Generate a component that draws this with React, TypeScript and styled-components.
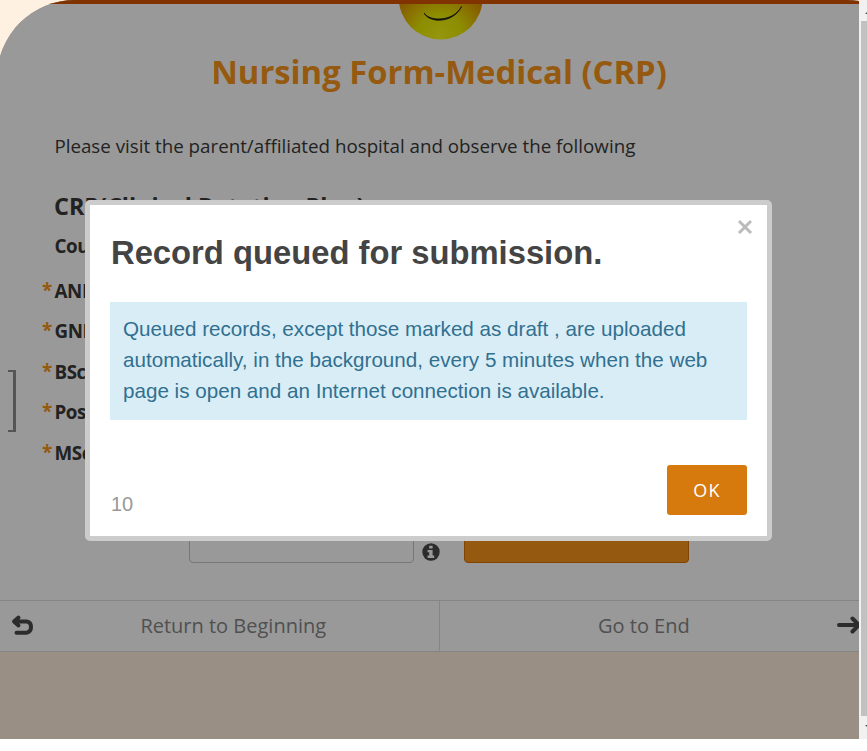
import React from 'react';
import styled, { createGlobalStyle } from 'styled-components';

const GlobalStyle = createGlobalStyle`
  * { box-sizing: border-box; }
  body { margin: 0; background: #fff; font-family: "Open Sans", sans-serif; overflow: hidden; }
  h1, h2, h3, p { margin: 0; }
`;

const Frame = styled.div`
  position: relative;
  display: flex;
  width: 867px;
  height: 739px;
  overflow: hidden;
  background: #fff1e2;
`;

const Viewport = styled.div`
  width: 859px;
  height: 739px;
  flex: none;
  overflow: hidden;
`;

const Shade = styled.div`
  width: 928px;
  height: 739px;
  margin-left: -3px;
  padding-left: 3px;
  border-radius: 78px 78px 0 0;
  overflow: hidden;
  background: #998f85;
`;

const Strip = styled.div`
  height: 4px;
  margin-left: -3px;
  background: #803300;
`;

const Paper = styled.main`
  display: flex;
  flex-direction: column;
  height: 648px;
  margin-left: -3px;
  padding-left: 3px;
  background: #999;
  color: #222;
`;

const Face = styled.svg`
  display: block;
  width: 86px;
  height: 36px;
  margin-left: 398px;
`;

const Title = styled.h1`
  width: 878px;
  height: 64px;
  text-align: center;
  font-size: 32.8px;
  line-height: 64px;
  font-weight: 700;
  color: #955910;
`;

const Intro = styled.p`
  margin: 26px 0 0 54.4px;
  height: 32px;
  font-size: 18.75px;
  line-height: 32px;
`;

const GroupTitle = styled.h3`
  margin: 27px 0 0 54px;
  height: 35px;
  font-size: 23.4px;
  line-height: 34px;
  font-weight: 700;
`;

const GridLabel = styled.div`
  margin: 8px 0 0 54.4px;
  height: 28px;
  font-size: 18.75px;
  line-height: 27px;
  font-weight: 700;
  letter-spacing: -0.4px;
`;

const Questions = styled.div`
  display: flex;
  height: 213px;
  margin-top: 10px;
`;

const Bracket = styled.div`
  width: 8px;
  height: 62px;
  margin: 100px 26px 0 8px;
  border: solid #555;
  border-width: 2px 3px 2px 0;
`;

const Labels = styled.div`
  display: flex;
  flex-direction: column;
`;

const Question = styled.div`
  display: flex;
  height: 40.4px;
  font-size: 18.75px;
  line-height: 41px;
  font-weight: 700;
  letter-spacing: -0.4px;
`;

const Star = styled.span`
  width: 12.5px;
  font-size: 19px;
  font-weight: 700;
  color: #955910;
`;

const Actions = styled.div`
  display: flex;
  height: 60px;
  margin: 30px 0 0 189px;
`;

const TextInput = styled.div`
  width: 225px;
  height: 50px;
  border: 1px solid #777;
  border-radius: 4px;
`;

const InfoIcon = styled.svg`
  width: 18px;
  height: 18px;
  margin: 29.5px 24.5px 0 7.5px;
`;

const Submit = styled.div`
  width: 225px;
  height: 50px;
  border: 1px solid #804400;
  border-radius: 4px;
  background: #955910;
`;

const PageNav = styled.nav`
  display: flex;
  height: 52px;
  flex: none;
  margin-top: auto;
  border: solid #858585;
  border-width: 1px 0;
  font-size: 20px;
  line-height: 50px;
  color: #505050;
`;

const NavItem = styled.div<{ $start?: boolean }>`
  display: flex;
  align-items: flex-start;
  width: ${p => (p.$start ? 440 : 428)}px;
  flex: none;
  border-right: ${p => (p.$start ? '1px solid #858585' : '0')};
`;

const NavText = styled.span<{ $left: number; $width: number }>`
  width: ${p => p.$width}px;
  flex: none;
  margin-left: ${p => p.$left}px;
  white-space: nowrap;
`;

const NavIcon = styled.svg<{ $left: number }>`
  width: 26px;
  height: 26px;
  flex: none;
  margin: 11px 0 0 ${p => p.$left}px;
  fill: none;
  stroke: #2c2c2c;
  stroke-width: 4;
  stroke-linecap: round;
  stroke-linejoin: round;
`;

const Scrollbar = styled.div`
  display: flex;
  flex-direction: column;
  width: 8px;
  flex: none;
  padding-left: 2px;
  background: #f1f1f1;
`;

const Thumb = styled.div`
  height: 695px;
  background: #c1c1c1;
`;

const ScrollArrow = styled.svg<{ $h: number }>`
  display: block;
  width: 6px;
  height: ${p => p.$h}px;
  fill: #505050;
`;

const Dialog = styled.section`
  position: absolute;
  left: 85px;
  top: 200px;
  width: 687px;
  height: 341px;
  display: flex;
  flex-direction: column;
  padding: 10px 20px 21px;
  border: 5px solid #ccc;
  border-radius: 5px;
  background: #fff;
  font-family: "Liberation Sans", Arial, sans-serif;
`;

const DialogHead = styled.header`
  display: flex;
  justify-content: space-between;
  height: 87px;
`;

const DialogTitle = styled.h2`
  margin-left: 1px;
  font-size: 32.75px;
  line-height: 76px;
  font-weight: 700;
  color: #444;
  white-space: nowrap;
`;

const CloseIcon = styled.svg`
  width: 16px;
  height: 16px;
  margin: 4px -6px 0 0;
  stroke: #bbb;
  stroke-width: 3;
`;

const Notice = styled.p`
  height: 118px;
  padding: 11px 13px;
  background: #d9edf7;
  color: #31708f;
  font-size: 20.63px;
  line-height: 31px;
  white-space: nowrap;
`;

const DialogFoot = styled.footer`
  display: flex;
  justify-content: space-between;
  align-items: flex-end;
  margin-top: auto;
`;

const Counter = styled.span`
  margin-left: 1px;
  font-size: 20px;
  line-height: 21px;
  color: #999;
`;

const OkButton = styled.button`
  width: 80px;
  height: 50px;
  padding: 0 0 1px 0;
  border: 0;
  border-radius: 3px;
  background: #d67a0e;
  color: #fff;
  font: 400 18px "Open Sans", sans-serif;
  letter-spacing: 1.2px;
`;

const questions = ['ANM', 'GNM', 'BSc', 'Post', 'MSc'];

export default function App() {
  return (
    <>
      <GlobalStyle />
      <Frame>
        <Viewport>
          <Shade>
            <Strip />
            <Paper>
              <Face viewBox="0 0 86 36">
                <defs>
                  <radialGradient id="skin" gradientUnits="userSpaceOnUse" cx="42" cy="33" r="52">
                    <stop offset="0" stopColor="#96960f" />
                    <stop offset=".45" stopColor="#8d8d00" />
                    <stop offset="1" stopColor="#855600" />
                  </radialGradient>
                </defs>
                <circle cx="42.7" cy="-6.5" r="42" fill="url(#skin)" />
                <path d="M26.3 9.2C31 19 55 20 63.5 2.5C56 17.5 32 18 26.3 9.2Z" fill="#111" stroke="#111" strokeWidth=".8" />
              </Face>
              <Title>Nursing Form-Medical (CRP)</Title>
              <Intro>Please visit the parent/affiliated hospital and observe the following</Intro>
              <GroupTitle>CRP(Clinical Rotation Plan)</GroupTitle>
              <GridLabel>Course</GridLabel>
              <Questions>
                <Bracket />
                <Labels>
                  {questions.map(q => (
                    <Question key={q}><Star>*</Star>{q}</Question>
                  ))}
                </Labels>
              </Questions>
              <Actions>
                <TextInput />
                <InfoIcon viewBox="0 0 18 18">
                  <circle cx="9" cy="9" r="8.7" fill="#2c2c2c" />
                  <path d="M7.2 2.8h3.4v2.7H7.2zM5.6 7h5v5.6h1.6v2.3H5.6v-2.3h1.6V9.2H5.6z" fill="#999" />
                </InfoIcon>
                <Submit />
              </Actions>
              <PageNav>
                <NavItem $start>
                  <NavIcon $left={10} viewBox="0 0 26 26">
                    <path d="M8.5 5.5L4 9.5L8.5 13.5M5 9.5H16.5Q21 10 21 15T16.5 20.7H6.5" />
                  </NavIcon>
                  <NavText $left={104.4} $width={199.6}>Return to Beginning</NavText>
                </NavItem>
                <NavItem>
                  <NavText $left={158} $width={100}>Go to End</NavText>
                  <NavIcon $left={137} viewBox="0 0 26 26">
                    <path d="M4 13H24M17.5 6.5L24 13L17.5 19.5" />
                  </NavIcon>
                </NavItem>
              </PageNav>
            </Paper>
          </Shade>
        </Viewport>
        <Scrollbar>
          <ScrollArrow $h={21} viewBox="0 0 6 21"><path d="M4 14L8 10V14Z" /></ScrollArrow>
          <Thumb />
          <ScrollArrow $h={23} viewBox="0 0 6 23"><path d="M4 9H8V13Z" /></ScrollArrow>
        </Scrollbar>
        <Dialog>
          <DialogHead>
            <DialogTitle>Record queued for submission.</DialogTitle>
            <CloseIcon viewBox="0 0 16 16"><path d="M2 2L14 14M14 2L2 14" /></CloseIcon>
          </DialogHead>
          <Notice>
            Queued records, except those marked as draft , are uploaded<br />
            automatically, in the background, every 5 minutes when the web<br />
            page is open and an Internet connection is available.
          </Notice>
          <DialogFoot>
            <Counter>10</Counter>
            <OkButton>OK</OkButton>
          </DialogFoot>
        </Dialog>
      </Frame>
    </>
  );
}
